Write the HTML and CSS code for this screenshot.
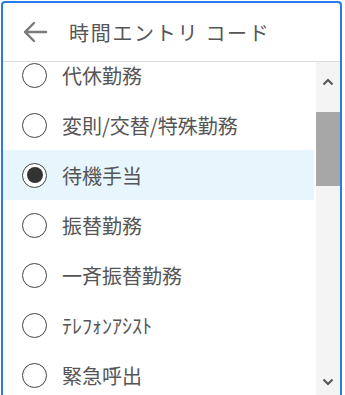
FILE: index.html
```html
<!DOCTYPE html>
<html lang="ja">
<head>
<meta charset="utf-8">
<link rel="stylesheet" href="styles.css">
</head>
<body>
<div class="dialog">
  <div class="header">
    <svg class="back" width="26" height="22" viewBox="0 0 26 22">
      <path d="M24 11H3M12 2L3 11l9 9" fill="none" stroke="#7a7a7a" stroke-width="2.4" stroke-linecap="round" stroke-linejoin="round"/>
    </svg>
    <span class="title">時間エントリ コード</span>
  </div>
  <div class="body">
    <div class="viewport">
      <ul class="list">
        <li class="row"><span class="radio"></span><span class="label">代休勤務</span></li>
        <li class="row"><span class="radio"></span><span class="label">変則/交替/特殊勤務</span></li>
        <li class="row selected"><span class="radio checked"></span><span class="label">待機手当</span></li>
        <li class="row"><span class="radio"></span><span class="label">振替勤務</span></li>
        <li class="row"><span class="radio"></span><span class="label">一斉振替勤務</span></li>
        <li class="row"><span class="radio"></span><span class="label">ﾃﾚﾌｫﾝｱｼｽﾄ</span></li>
        <li class="row"><span class="radio"></span><span class="label">緊急呼出</span></li>
      </ul>
    </div>
    <div class="scrollbar">
      <div class="sb-btn sb-up">
        <svg width="12" height="8" viewBox="0 0 12 8"><path d="M1.5 6.5L6 2l4.5 4.5" fill="none" stroke="#555" stroke-width="2"/></svg>
      </div>
      <div class="sb-track"><div class="sb-thumb"></div></div>
      <div class="sb-btn sb-down">
        <svg width="12" height="8" viewBox="0 0 12 8"><path d="M1.5 1.5L6 6l4.5-4.5" fill="none" stroke="#555" stroke-width="2"/></svg>
      </div>
    </div>
  </div>
</div>
</body>
</html>
```
FILE: styles.css
```css
html, body {
  margin: 0;
  padding: 0;
  background: #ffffff;
  overflow: hidden;
}
body {
  width: 345px;
  height: 395px;
  font-family: "Noto Sans CJK JP", "Noto Sans", sans-serif;
  color: #555555;
}
.dialog {
  margin: 1px 0 0 1px;
  width: 337px;
  height: 392px;
  border: 2px solid #2a7be6;
  border-bottom: none;
  border-radius: 4px 4px 0 0;
  display: flex;
  flex-direction: column;
  background: #fff;
}
.header {
  height: 58px;
  flex: none;
  display: flex;
  align-items: center;
  padding-left: 19px;
  border-bottom: 1px solid #dcdcdc;
}
.back {
  display: block;
  margin-right: 21px;
}
.title {
  font-size: 20px;
  color: #555555;
  letter-spacing: 1.7px;
}
.body {
  flex: 1;
  display: flex;
  min-height: 0;
}
.viewport {
  width: 313px;
  overflow: hidden;
}
.list {
  list-style: none;
  margin: -12px 0 0 0;
  padding: 0;
}
.row {
  height: 50px;
  display: flex;
  align-items: center;
  padding-left: 19px;
  margin-right: 2px;
}
.row.selected {
  background: #e7f6fd;
}
.radio {
  width: 23px;
  height: 23px;
  border: 1.6px solid #444;
  border-radius: 50%;
  box-sizing: content-box;
  flex: none;
  position: relative;
  background: #fff;
}
.radio.checked::after {
  content: "";
  position: absolute;
  left: 3.5px;
  top: 3.5px;
  width: 16px;
  height: 16px;
  border-radius: 50%;
  background: #333;
}
.label {
  margin-left: 15px;
  font-size: 20px;
  color: #555555;
}
.scrollbar {
  width: 24px;
  background: #f4f4f4;
  display: flex;
  flex-direction: column;
}
.sb-btn {
  height: 40px;
  display: flex;
  justify-content: center;
  flex: none;
  box-sizing: border-box;
}
.sb-up {
  padding-top: 16px;
}
.sb-track {
  flex: 1;
  padding-top: 10px;
}
.sb-thumb {
  height: 74px;
  background: #a7a7a7;
}
.sb-down {
  padding-top: 23px;
}
```
